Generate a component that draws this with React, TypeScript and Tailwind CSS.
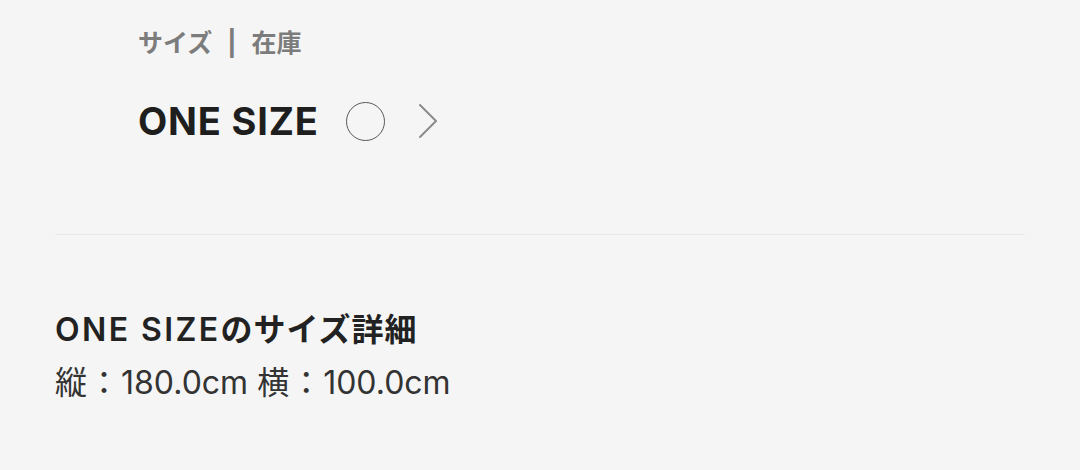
const font = { fontFamily: '"Inter", "Noto Sans CJK JP", sans-serif' };

function Chevron() {
  return (
    <svg width="20" height="36" viewBox="0 0 20 36" className="ml-[33px]" fill="none">
      <polyline points="2,2 18,18 2,34" stroke="#8a8a8a" strokeWidth="2" strokeLinecap="round" strokeLinejoin="round" />
    </svg>
  );
}

function StockRow() {
  return (
    <div className="mt-[44px] flex h-[40px] items-center">
      <span className="text-[38px] leading-[40px] font-bold tracking-[0.8px] text-[#1e1e1e]">ONE SIZE</span>
      <span className="ml-[27px] box-border size-[39px] rounded-full border-[1.6px] border-[#5a5a5a]" />
      <Chevron />
    </div>
  );
}

export default function App() {
  return (
    <div className="min-h-screen bg-[#f5f5f5] px-[55px] pt-[29px]" style={font}>
      <section className="pl-[83px]">
        <div className="flex h-[28px] items-center text-[25px] leading-[28px] font-bold text-[#7c7c7c]">
          <span>サイズ</span>
          <span className="mx-[15px]">|</span>
          <span>在庫</span>
        </div>
        <StockRow />
      </section>

      <div className="mt-[93px] h-px bg-[#e9e9e9]" />

      <section className="mt-[76px]">
        <h2 className="text-[32px] leading-[38px] font-semibold tracking-[1px] text-[#222222]">
          <span className="tracking-[2.4px]">ONE SIZE</span>のサイズ詳細
        </h2>
        <p className="mt-[16px] text-[32px] leading-[36px] text-[#333333]">
          縦<span className="mx-px">：</span>180.0cm 横<span className="mx-px">：</span>100.0cm
        </p>
      </section>
    </div>
  );
}
